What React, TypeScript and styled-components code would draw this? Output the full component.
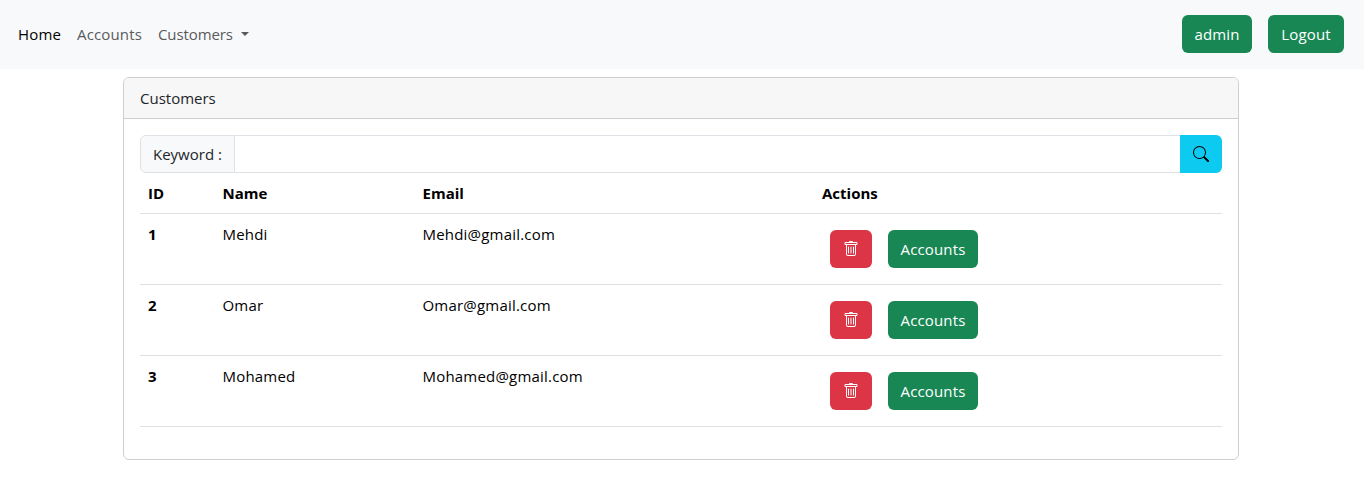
import React from 'react';
import styled, { createGlobalStyle } from 'styled-components';
import { BsSearch, BsTrash } from 'react-icons/bs';

const GlobalStyle = createGlobalStyle`
  *, *::before, *::after { box-sizing: border-box; }
  body {
    margin: 0;
    background: #fff;
    color: #212529;
    font-family: "Open Sans", "Noto Sans", sans-serif;
    font-size: 15px;
    line-height: 24px;
  }
`;

const Navbar = styled.nav`
  display: flex;
  align-items: center;
  justify-content: space-between;
  height: 69px;
  padding: 0 20px 1px 18px;
  background: #f8f9fb;
`;

const NavLinks = styled.div`
  display: flex;
  gap: 16px;
`;

const NavLink = styled.a<{ $active?: boolean; $width: number; $tracking?: number }>`
  display: flex;
  align-items: center;
  width: ${(p) => p.$width}px;
  color: ${(p) => (p.$active ? '#000' : '#595a5b')};
  letter-spacing: ${(p) => p.$tracking ?? 0}px;
  white-space: nowrap;
`;

const Caret = styled.span`
  margin-left: auto;
  border-top: 4.8px solid;
  border-right: 4.8px solid transparent;
  border-left: 4.8px solid transparent;
`;

const NavActions = styled.div`
  display: flex;
  gap: 16px;
`;

const Button = styled.button<{ $color?: string; $width: number }>`
  display: flex;
  align-items: center;
  justify-content: center;
  width: ${(p) => p.$width}px;
  height: 38px;
  padding: 0;
  border: 0;
  border-radius: 6px;
  background: ${(p) => p.$color ?? '#198754'};
  color: #fff;
  font: inherit;
  letter-spacing: 0.15px;
`;

const Card = styled.section`
  width: 1116px;
  margin: 8px 0 0 123px;
  border: 1px solid #cfcfcf;
  border-radius: 6px;
  overflow: hidden;
`;

const CardHeader = styled.header`
  height: 41px;
  padding: 8px 16px;
  border-bottom: 1px solid #cfcfcf;
  background: #f7f7f7;
`;

const CardBody = styled.div`
  padding: 16px;
`;

const InputGroup = styled.div`
  display: flex;
  height: 38px;
`;

const InputLabel = styled.label`
  display: flex;
  align-items: center;
  width: 95px;
  padding-left: 12px;
  border: 1px solid #dee2e6;
  border-radius: 6px 0 0 6px;
  background: #f8f9fb;
`;

const Input = styled.input`
  flex: 1;
  min-width: 0;
  border: solid #dee2e6;
  border-width: 1px 0;
  outline: none;
  font: inherit;
`;

const SearchButton = styled(Button)`
  border-radius: 0 6px 6px 0;
  color: #000;
`;

const Table = styled.table`
  width: 100%;
  margin-bottom: 16px;
  border-collapse: separate;
  border-spacing: 0;
  table-layout: fixed;
  color: #000;
`;

const Cell = styled.td`
  padding: 8px;
  border-bottom: 1px solid #dee2e6;
  letter-spacing: 0.2px;
  text-align: left;
  vertical-align: top;
`;

const HeadCell = styled(Cell).attrs({ as: 'th' })<{ $width?: number }>`
  width: ${(p) => (p.$width ? `${p.$width}px` : 'auto')};
  font-weight: 700;
  letter-spacing: 0;
`;

const RowActions = styled.div`
  display: flex;
  gap: 16px;
  padding: 8px;
`;

const customers = [
  { id: 1, name: 'Mehdi', email: 'Mehdi@gmail.com' },
  { id: 2, name: 'Omar', email: 'Omar@gmail.com' },
  { id: 3, name: 'Mohamed', email: 'Mohamed@gmail.com' },
];

export default function App() {
  return (
    <>
      <GlobalStyle />
      <Navbar>
        <NavLinks>
          <NavLink $active $width={43} $tracking={0.2}>Home</NavLink>
          <NavLink $width={65} $tracking={0.15}>Accounts</NavLink>
          <NavLink $width={91} $tracking={-0.1}>Customers<Caret /></NavLink>
        </NavLinks>
        <NavActions>
          <Button $width={70}>admin</Button>
          <Button $width={76}>Logout</Button>
        </NavActions>
      </Navbar>
      <Card>
        <CardHeader>Customers</CardHeader>
        <CardBody>
          <InputGroup>
            <InputLabel htmlFor="keyword">Keyword :</InputLabel>
            <Input id="keyword" type="text" />
            <SearchButton $color="#0dcaf0" $width={42} aria-label="Search">
              <BsSearch size={16} />
            </SearchButton>
          </InputGroup>
          <Table>
            <thead>
              <tr>
                <HeadCell $width={74.5}>ID</HeadCell>
                <HeadCell $width={200}>Name</HeadCell>
                <HeadCell $width={399.5}>Email</HeadCell>
                <HeadCell>Actions</HeadCell>
              </tr>
            </thead>
            <tbody>
              {customers.map((c) => (
                <tr key={c.id}>
                  <HeadCell>{c.id}</HeadCell>
                  <Cell>{c.name}</Cell>
                  <Cell>{c.email}</Cell>
                  <Cell>
                    <RowActions>
                      <Button $color="#dc3545" $width={42} aria-label="Delete">
                        <BsTrash size={16} />
                      </Button>
                      <Button $width={90}>Accounts</Button>
                    </RowActions>
                  </Cell>
                </tr>
              ))}
            </tbody>
          </Table>
        </CardBody>
      </Card>
    </>
  );
}
